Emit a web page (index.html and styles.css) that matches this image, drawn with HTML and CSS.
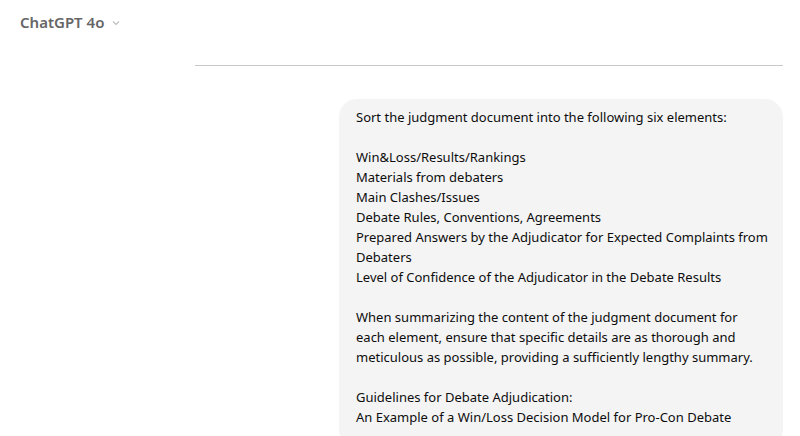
FILE: index.html
```html
<!DOCTYPE html>
<html>
<head>
<meta charset="utf-8">
<link rel="stylesheet" href="styles.css">
</head>
<body>
<header class="topbar">
  <span class="model">ChatGPT 4o</span>
  <svg class="chev" width="10" height="10" viewBox="0 0 10 10"><path d="M2 3.5 L5 6.5 L8 3.5" fill="none" stroke="#bdbdbd" stroke-width="1.1"/></svg>
</header>
<main class="thread">
  <hr class="divider">
  <div class="row">
    <div class="bubble">
      <p class="ln">Sort the judgment document into the following six elements:</p>
      <p class="ln gap"></p>
      <p class="ln">Win&amp;Loss/Results/Rankings</p>
      <p class="ln">Materials from debaters</p>
      <p class="ln">Main Clashes/Issues</p>
      <p class="ln">Debate Rules, Conventions, Agreements</p>
      <p class="ln">Prepared Answers by the Adjudicator for Expected Complaints from</p>
      <p class="ln">Debaters</p>
      <p class="ln">Level of Confidence of the Adjudicator in the Debate Results</p>
      <p class="ln gap"></p>
      <p class="ln">When summarizing the content of the judgment document for</p>
      <p class="ln">each element, ensure that specific details are as thorough and</p>
      <p class="ln">meticulous as possible, providing a sufficiently lengthy summary.</p>
      <p class="ln gap"></p>
      <p class="ln">Guidelines for Debate Adjudication:</p>
      <p class="ln">An Example of a Win/Loss Decision Model for Pro-Con Debate</p>
    </div>
  </div>
</main>
</body>
</html>
```
FILE: styles.css
```css
html, body {
  margin: 0;
  padding: 0;
  background: #ffffff;
  height: 436px;
  overflow: hidden;
}
body {
  font-family: "Noto Sans", "Open Sans", sans-serif;
  color: #0d0d0d;
}
.topbar {
  display: flex;
  align-items: center;
  gap: 7px;
  height: 44px;
  padding-left: 20px;
}
.model {
  font-size: 15px;
  font-weight: 600;
  color: #666666;
}
.chev {
  margin-top: 2px;
}
.thread {
  padding-left: 195px;
  padding-right: 17px;
}
.divider {
  margin: 21px 0 0 0;
  border: 0;
  border-top: 1px solid #c9c9c9;
  height: 0;
}
.row {
  display: flex;
  justify-content: flex-end;
  padding-top: 33px;
}
.bubble {
  width: 410px;
  background: #f4f4f4;
  border-radius: 18px;
  padding: 8px 17px 20px 17px;
}
.ln {
  margin: 0;
  font-size: 13px;
  line-height: 20px;
  height: 20px;
  white-space: nowrap;
}
```
